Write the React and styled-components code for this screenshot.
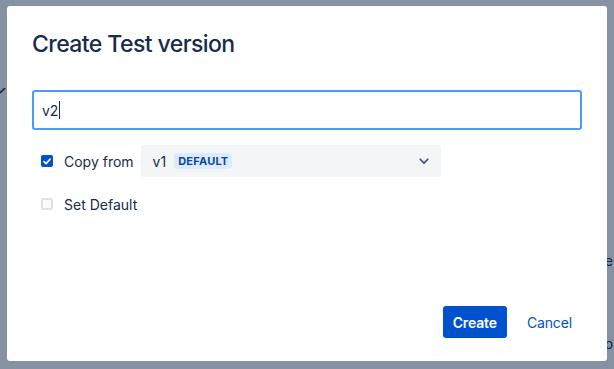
import React from "react";
import styled, { createGlobalStyle } from "styled-components";

const GlobalStyle = createGlobalStyle`
  html, body {
    margin: 0;
    padding: 0;
    height: 100%;
  }
  body {
    font-family: Inter, "Noto Sans", "Liberation Sans", sans-serif;
    color: #172b4d;
    overflow: hidden;
  }
`;

const Page = styled.div`
  height: 100vh;
  background: #ffffff;
  display: flex;
  justify-content: space-between;
  font-size: 14px;
  color: #172b4d;
`;

const PageLeft = styled.div`
  padding-top: 80px;
`;

const PageRight = styled.div`
  display: flex;
  flex-direction: column;
  align-items: flex-end;
  padding-top: 252px;
  gap: 66px;
  padding-right: 1px;
  white-space: nowrap;
`;

const Blanket = styled.div`
  position: fixed;
  inset: 0;
  background: rgba(9, 30, 66, 0.49);
`;

const Modal = styled.div`
  position: fixed;
  left: 7px;
  top: 6px;
  width: 600px;
  height: 355px;
  box-sizing: border-box;
  background: #ffffff;
  border-radius: 3px;
  padding: 24px 25px 23px;
  display: flex;
  flex-direction: column;
`;

const Title = styled.h1`
  margin: 0;
  font-size: 23px;
  line-height: 28px;
  font-weight: 500;
  letter-spacing: -0.025em;
  color: #172b4d;
`;

const Body = styled.div`
  flex: 1;
  padding-top: 32px;
  display: flex;
  flex-direction: column;
`;

const Field = styled.div`
  height: 40px;
  box-sizing: border-box;
  border: 2px solid #4c9aff;
  border-radius: 3px;
  padding: 0 8px;
  display: flex;
  align-items: center;
  font-size: 14px;
  color: #172b4d;
`;

const Caret = styled.span`
  display: inline-block;
  width: 1px;
  height: 18px;
  background: #172b4d;
  margin-left: 1px;
`;

const Options = styled.div`
  display: flex;
  flex-direction: column;
  gap: 11px;
  padding-top: 15px;
`;

const CheckRow = styled.label`
  display: flex;
  align-items: center;
  height: 32px;
  padding-left: 9px;
  font-size: 14px;
  color: #172b4d;
`;

const Box = styled.span`
  width: 12px;
  height: 12px;
  box-sizing: border-box;
  border-radius: 2px;
  display: flex;
  align-items: center;
  justify-content: center;
  margin-right: 11px;
  background: ${(p) => (p.$checked ? "#0052cc" : "#fafbfc")};
  border: ${(p) => (p.$checked ? "none" : "2px solid #dfe1e6")};
`;

const Select = styled.div`
  margin-left: 7px;
  width: 300px;
  height: 32px;
  box-sizing: border-box;
  background: #f4f5f7;
  border-radius: 3px;
  padding: 0 10px 0 12px;
  display: flex;
  align-items: center;
  gap: 8px;
`;

const Value = styled.span`
  font-size: 14px;
  color: #172b4d;
`;

const Lozenge = styled.span`
  background: #deebff;
  color: #0747a6;
  font-size: 11px;
  font-weight: 700;
  line-height: 16px;
  padding: 0 4px;
  border-radius: 3px;
  text-transform: uppercase;
  letter-spacing: 0.02em;
`;

const Chevron = styled.svg`
  margin-left: auto;
`;

const Footer = styled.div`
  display: flex;
  justify-content: flex-end;
  gap: 10px;
`;

const Button = styled.button`
  height: 32px;
  padding: 0 10px;
  border: none;
  border-radius: 3px;
  font-family: inherit;
  font-size: 14px;
  font-weight: ${(p) => (p.$primary ? 600 : 400)};
  letter-spacing: -0.01em;
  background: ${(p) => (p.$primary ? "#0052cc" : "transparent")};
  color: ${(p) => (p.$primary ? "#ffffff" : "#0052cc")};
  cursor: pointer;
`;

const Check = () => (
  <svg width="8" height="7" viewBox="0 0 8 7">
    <path
      d="M1 3.6 L3.1 5.6 L7 1.2"
      fill="none"
      stroke="#ffffff"
      strokeWidth="1.7"
      strokeLinecap="round"
      strokeLinejoin="round"
    />
  </svg>
);

export default function App() {
  return (
    <>
      <GlobalStyle />
      <Page>
        <PageLeft>
          <svg width="6" height="6" viewBox="0 0 6 6">
            <path d="M0 5 L5 0" stroke="#172b4d" strokeWidth="1.6" />
          </svg>
        </PageLeft>
        <PageRight>
          <span>Ve</span>
          <span>p</span>
        </PageRight>
      </Page>
      <Blanket />
      <Modal>
        <Title>Create Test version</Title>
        <Body>
          <Field>
            v2
            <Caret />
          </Field>
          <Options>
            <CheckRow>
              <Box $checked>
                <Check />
              </Box>
              Copy from
              <Select>
                <Value>v1</Value>
                <Lozenge>Default</Lozenge>
                <Chevron width="14" height="14" viewBox="0 0 24 24">
                  <path
                    d="M5.5 9 L12 15.5 L18.5 9"
                    fill="none"
                    stroke="#42526e"
                    strokeWidth="3"
                    strokeLinecap="round"
                    strokeLinejoin="round"
                  />
                </Chevron>
              </Select>
            </CheckRow>
            <CheckRow>
              <Box />
              Set Default
            </CheckRow>
          </Options>
        </Body>
        <Footer>
          <Button $primary>Create</Button>
          <Button>Cancel</Button>
        </Footer>
      </Modal>
    </>
  );
}
